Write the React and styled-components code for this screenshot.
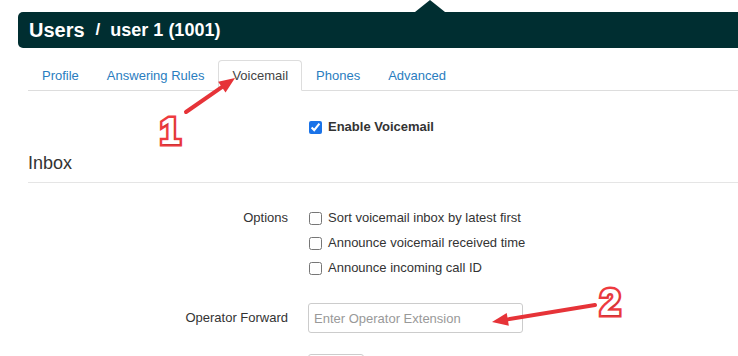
import React from "react";
import styled, { createGlobalStyle } from "styled-components";

const GlobalStyle = createGlobalStyle`
  html, body {
    margin: 0;
    padding: 0;
    background: #fff;
    font-family: "Liberation Sans", Arial, sans-serif;
    font-size: 13px;
    color: #333;
  }
`;

const Page = styled.div`
  position: relative;
  width: 738px;
  height: 356px;
  overflow: hidden;
  padding-top: 12px;
  box-sizing: border-box;
`;

const Header = styled.div`
  position: relative;
  margin-left: 18px;
  height: 36px;
  background: #002e31;
  border-radius: 5px 0 0 5px;
  display: flex;
  align-items: center;
  padding-left: 11px;
  color: #fff;
  font-weight: bold;

  &::before {
    content: "";
    position: absolute;
    left: 397px;
    top: -12px;
    border-left: 15px solid transparent;
    border-right: 15px solid transparent;
    border-bottom: 12px solid #002e31;
  }
`;

const HeaderTitle = styled.span`
  font-size: 20px;
`;

const HeaderSlash = styled.span`
  font-size: 17px;
  margin: 0 10px 0 11px;
`;

const HeaderSub = styled.span`
  font-size: 18px;
`;

const TabRow = styled.ul`
  list-style: none;
  display: flex;
  margin: 12px 0 0 28px;
  padding: 0;
  border-bottom: 1px solid #ddd;
`;

const Tab = styled.li`
  height: 29px;
  display: flex;
  align-items: center;
  padding: 0 13px;
  margin-bottom: -1px;
  border: 1px solid ${({ $active }) => ($active ? "#ddd" : "transparent")};
  border-bottom-color: ${({ $active }) => ($active ? "#fff" : "transparent")};
  border-radius: 4px 4px 0 0;
  background: ${({ $active }) => ($active ? "#fff" : "transparent")};
  color: ${({ $active }) => ($active ? "#444" : "#2a7dc0")};
`;

const Content = styled.div`
  padding-left: 28px;
`;

const FormRow = styled.div`
  display: grid;
  grid-template-columns: 260px 1fr;
  column-gap: 20px;
  align-items: ${({ $top }) => ($top ? "start" : "center")};
  margin-top: ${({ $mt }) => $mt || 0}px;
`;

const Label = styled.div`
  text-align: right;
  line-height: 16px;
  color: #333;
`;

const CheckList = styled.div`
  display: flex;
  flex-direction: column;
  gap: 9px;
`;

const CheckLine = styled.label`
  display: flex;
  align-items: center;
  gap: 6px;
  line-height: 16px;
  font-weight: ${({ $bold }) => ($bold ? "bold" : "normal")};
  color: #333;

  input {
    margin: 0 0 0 1px;
    width: 13px;
    height: 13px;
    accent-color: #1a73e8;
  }
`;

const Section = styled.h3`
  margin: 18px 0 0;
  padding-bottom: 9px;
  border-bottom: 1px solid #e5e5e5;
  font-size: 18px;
  font-weight: normal;
  color: #333;
  line-height: 20px;
`;

const TextInput = styled.input`
  box-sizing: border-box;
  width: ${({ $w }) => $w}px;
  height: 30px;
  border: 1px solid #ccc;
  border-radius: 3px;
  padding: 0 5px;
  font-family: inherit;
  font-size: 13px;
  color: #555;

  &::placeholder {
    color: #999;
  }
`;

const Overlay = styled.svg`
  position: absolute;
  left: 0;
  top: 0;
  pointer-events: none;
`;

const Badge = styled.span`
  position: absolute;
  left: ${({ $x }) => $x}px;
  top: ${({ $y }) => $y}px;
  font-family: "Liberation Sans", Arial, sans-serif;
  font-weight: bold;
  font-size: 37px;
  line-height: 1;
  color: #fff;
  -webkit-text-stroke: 5px #ee3b3f;
  paint-order: stroke fill;
  text-shadow: 1px 1px 1px rgba(0, 0, 0, 0.15);
`;

function Arrow({ x1, y1, x2, y2 }) {
  const ang = Math.atan2(y2 - y1, x2 - x1);
  const len = 16;
  const half = 6.5;
  const bx = x2 - len * Math.cos(ang);
  const by = y2 - len * Math.sin(ang);
  const px = -Math.sin(ang) * half;
  const py = Math.cos(ang) * half;
  return (
    <g>
      <line x1={x1} y1={y1} x2={bx} y2={by} stroke="#e63338" strokeWidth="4" strokeLinecap="round" />
      <polygon points={`${x2},${y2} ${bx + px},${by + py} ${bx - px},${by - py}`} fill="#e63338" />
    </g>
  );
}

export default function App() {
  return (
    <>
      <GlobalStyle />
      <Page>
        <Header>
          <HeaderTitle>Users</HeaderTitle>
          <HeaderSlash>/</HeaderSlash>
          <HeaderSub>user 1 (1001)</HeaderSub>
        </Header>

        <TabRow>
          <Tab>Profile</Tab>
          <Tab>Answering Rules</Tab>
          <Tab $active>Voicemail</Tab>
          <Tab>Phones</Tab>
          <Tab>Advanced</Tab>
        </TabRow>

        <Content>
          <FormRow $mt={28}>
            <div />
            <CheckLine $bold>
              <input type="checkbox" defaultChecked />
              Enable Voicemail
            </CheckLine>
          </FormRow>

          <Section>Inbox</Section>

          <FormRow $top $mt={27}>
            <Label>Options</Label>
            <CheckList>
              <CheckLine>
                <input type="checkbox" />
                Sort voicemail inbox by latest first
              </CheckLine>
              <CheckLine>
                <input type="checkbox" />
                Announce voicemail received time
              </CheckLine>
              <CheckLine>
                <input type="checkbox" />
                Announce incoming call ID
              </CheckLine>
            </CheckList>
          </FormRow>

          <FormRow $mt={27}>
            <Label>Operator Forward</Label>
            <TextInput $w={215} placeholder="Enter Operator Extension" />
          </FormRow>

          <FormRow $mt={21}>
            <div />
            <TextInput $w={56} />
          </FormRow>
        </Content>

        <Overlay width="738" height="356">
          <Arrow x1={186} y1={112} x2={235} y2={78} />
          <Arrow x1={595} y1={305} x2={492} y2={322} />
        </Overlay>
        <Badge $x={160} $y={113}>1</Badge>
        <Badge $x={600} $y={284}>2</Badge>
      </Page>
    </>
  );
}
